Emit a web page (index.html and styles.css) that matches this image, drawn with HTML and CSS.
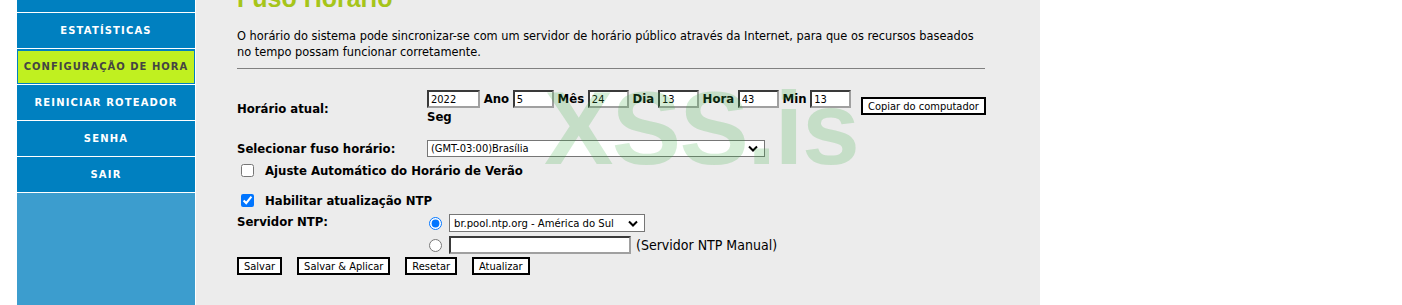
FILE: index.html
```html
<!DOCTYPE html>
<html lang="pt-BR">
<head>
<meta charset="utf-8">
<title>Fuso Horário</title>
<link rel="stylesheet" href="styles.css">
</head>
<body>
<div class="page">
  <nav class="sidebar">
    <a class="nav-item">Status</a>
    <a class="nav-item">Estatísticas</a>
    <a class="nav-item active">Configuração de Hora</a>
    <a class="nav-item">Reiniciar Roteador</a>
    <a class="nav-item">Senha</a>
    <a class="nav-item">Sair</a>
  </nav>
  <main class="main">
    <h1 class="title">Fuso Horário</h1>
    <p class="desc">O horário do sistema pode sincronizar-se com um servidor de horário público através da Internet, para que os recursos baseados no tempo possam funcionar corretamente.</p>
    <hr class="rule">
    <form class="form">
      <div class="row row-time">
        <div class="lbl">Horário atual:</div>
        <div class="time-fields">
          <input class="field num" type="text" value="2022"> <b>Ano</b>
          <input class="field num" type="text" value="5"> <b>Mês</b>
          <input class="field num" type="text" value="24"> <b>Dia</b>
          <input class="field num" type="text" value="13"> <b>Hora</b>
          <input class="field num" type="text" value="43"> <b>Min</b>
          <input class="field num" type="text" value="13"> <b>Seg</b>
        </div>
        <div class="copy"><button type="button" class="btn">Copiar do computador</button></div>
      </div>
      <div class="row row-tz">
        <div class="lbl">Selecionar fuso horário:</div>
        <select class="sel tz"><option>(GMT-03:00)Brasília</option></select>
      </div>
      <label class="check"><input type="checkbox"> Ajuste Automático do Horário de Verão</label>
      <label class="check check-ntp"><input type="checkbox" checked> Habilitar atualização NTP</label>
      <div class="row row-ntp">
        <div class="lbl">Servidor NTP:</div>
        <div class="ntp-opts">
          <div class="opt"><input type="radio" name="ntp" checked><select class="sel ntp"><option>br.pool.ntp.org - América do Sul</option></select></div>
          <div class="opt"><input type="radio" name="ntp"><input class="field manual" type="text"> <span class="hint">(Servidor NTP Manual)</span></div>
        </div>
      </div>
      <div class="actions">
        <button type="button" class="btn">Salvar</button>
        <button type="button" class="btn">Salvar &amp; Aplicar</button>
        <button type="button" class="btn">Resetar</button>
        <button type="button" class="btn">Atualizar</button>
      </div>
    </form>
    <div class="watermark">XSS.is</div>
  </main>
</div>
</body>
</html>
```
FILE: styles.css
```css
html, body { margin: 0; padding: 0; }
body {
  background: #fff;
  font-family: "DejaVu Sans Condensed", "DejaVu Sans", sans-serif;
  color: #000;
  overflow: hidden;
}
.page {
  display: flex;
  margin-top: -23px;
  padding-left: 17px;
  min-height: 340px;
}
.sidebar {
  flex: 0 0 178px;
  background: #3c9dce;
  display: flex;
  flex-direction: column;
  border-right: 1px solid #fff;
}
.nav-item {
  box-sizing: border-box;
  height: 36px;
  border-bottom: 1px solid #fff;
  background: #0080c0;
  display: flex;
  align-items: center;
  justify-content: center;
  color: #fff;
  font: bold 10px "DejaVu Sans", sans-serif;
  letter-spacing: 1.15px;
  text-transform: uppercase;
}
.nav-item.active {
  background: #c0f020;
  color: #444;
  letter-spacing: 1px;
  box-shadow: inset 0 0 0 1px #0080c0, inset 0 1px 0 1px #0080c0;
}
.main {
  flex: 0 0 844px;
  background: #ececec;
  padding: 6px 0 0 41px;
  box-sizing: border-box;
  position: relative;
  overflow: hidden;
}
.title {
  margin: 0;
  font: bold 25px/30px "Liberation Sans", Arial, sans-serif;
  color: #a6c51a;
}
.desc {
  margin: 15px 0 0;
  width: 748px;
  font-size: 12.65px;
  line-height: 16px;
}
.rule {
  margin: 8px 0 0;
  width: 748px;
  border: 0;
  border-top: 1px solid #808080;
  height: 0;
}
.form {
  margin-top: 21px;
  font-size: 13px;
}
.row { display: flex; }
.lbl {
  flex: 0 0 190px;
  font-weight: bold;
  font-size: 13px;
}
.row-time { align-items: center; }
.time-fields {
  width: 430px;
  line-height: 18px;
  font-size: 13px;
}
.time-fields b { font-weight: bold; }
.field {
  box-sizing: border-box;
  height: 18px;
  border-style: solid;
  border-width: 2px;
  border-color: #3a3a3a #a0a0a0 #a0a0a0 #3a3a3a;
  background: #fff;
  font: 11px "DejaVu Sans Condensed", "DejaVu Sans", sans-serif;
  padding: 0 2px;
  margin: 0;
  vertical-align: top;
}
.num { width: 41px; }
.num:first-child { width: 53px; }
.copy { padding: 0 0 4px 4px; }
.btn {
  box-sizing: border-box;
  height: 18px;
  border: 2px solid #000;
  background: #fff;
  font: 11px "DejaVu Sans Condensed", "DejaVu Sans", sans-serif;
  color: #000;
  padding: 0 5px;
  margin: 0;
}
.row-tz { margin-top: 14px; align-items: center; }
.sel {
  appearance: none;
  -webkit-appearance: none;
  box-sizing: border-box;
  height: 17px;
  border: 1px solid #767676;
  background: #fff url("data:image/svg+xml,%3Csvg xmlns='http://www.w3.org/2000/svg' width='10' height='7' viewBox='0 0 10 7'%3E%3Cpath d='M1 1.5l4 4 4-4' fill='none' stroke='%23000' stroke-width='2'/%3E%3C/svg%3E") no-repeat right 6px center;
  font: 11px "DejaVu Sans Condensed", "DejaVu Sans", sans-serif;
  padding: 0 20px 0 3px;
  margin: 0;
  border-radius: 0;
  color: #000;
}
.tz { width: 338px; }
.check {
  display: flex;
  align-items: center;
  font-weight: bold;
  font-size: 13px;
  height: 14px;
  margin-top: 6px;
}
.check input { margin: 0 11px 0 4px; width: 13px; height: 13px; }
.check-ntp { margin-top: 16px; }
.row-ntp { margin-top: 7px; }
.ntp-opts { display: flex; flex-direction: column; gap: 4px; }
.opt { display: flex; align-items: center; }
.opt input[type=radio] { margin: 0 7px 0 2px; width: 13px; height: 13px; }
.ntp { width: 196px; height: 18px; font-size: 11.2px; padding-left: 4px; }
.manual { width: 182px; }
.hint { font-size: 14px; margin-left: 5px; }
.actions {
  display: flex;
  gap: 15px;
  margin-top: 3px;
}
.watermark {
  position: absolute;
  left: 348px;
  top: 99px;
  font: bold 104px/104px "Liberation Sans", Arial, sans-serif;
  letter-spacing: -1.6px;
  color: rgba(60, 175, 70, 0.22);
  pointer-events: none;
  white-space: nowrap;
}
```
